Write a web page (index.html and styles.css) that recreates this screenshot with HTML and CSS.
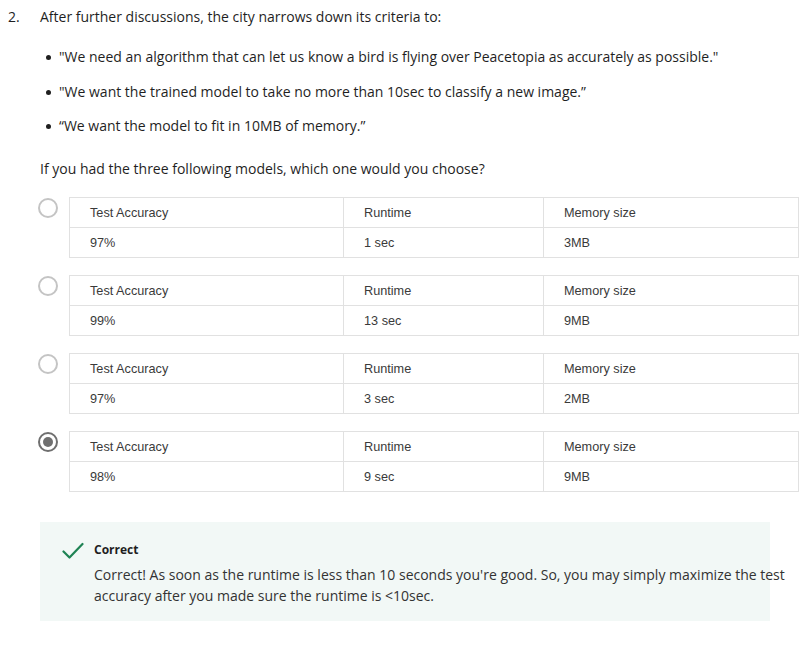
FILE: index.html
```html
<!DOCTYPE html>
<html>
<head>
<meta charset="utf-8">
<link rel="stylesheet" href="styles.css">
</head>
<body>
<div class="question">
  <div class="num">2.</div>
  <div class="content">
    <p class="prompt">After further discussions, the city narrows down its criteria to:</p>
    <ul class="criteria">
      <li>"We need an algorithm that can let us know a bird is flying over Peacetopia as accurately as possible."</li>
      <li>"We want the trained model to take no more than 10sec to classify a new image.”</li>
      <li>“We want the model to fit in 10MB of memory.”</li>
    </ul>
    <p class="ask">If you had the three following models, which one would you choose?</p>

    <div class="options">
      <div class="option">
        <span class="radio"></span>
        <table class="model">
          <tr><td class="c1">Test Accuracy</td><td class="c2">Runtime</td><td class="c3">Memory size</td></tr>
          <tr><td>97%</td><td>1 sec</td><td>3MB</td></tr>
        </table>
      </div>
      <div class="option">
        <span class="radio"></span>
        <table class="model">
          <tr><td class="c1">Test Accuracy</td><td class="c2">Runtime</td><td class="c3">Memory size</td></tr>
          <tr><td>99%</td><td>13 sec</td><td>9MB</td></tr>
        </table>
      </div>
      <div class="option">
        <span class="radio"></span>
        <table class="model">
          <tr><td class="c1">Test Accuracy</td><td class="c2">Runtime</td><td class="c3">Memory size</td></tr>
          <tr><td>97%</td><td>3 sec</td><td>2MB</td></tr>
        </table>
      </div>
      <div class="option">
        <span class="radio checked"></span>
        <table class="model">
          <tr><td class="c1">Test Accuracy</td><td class="c2">Runtime</td><td class="c3">Memory size</td></tr>
          <tr><td>98%</td><td>9 sec</td><td>9MB</td></tr>
        </table>
      </div>
    </div>

    <div class="feedback">
      <svg class="check" width="22" height="18" viewBox="0 0 22 18">
        <path d="M1.5 9.5 L7.5 15.5 L20.5 2" fill="none" stroke="#1f8354" stroke-width="2.2" stroke-linecap="round" stroke-linejoin="round"/>
      </svg>
      <div class="fb-text">
        <div class="fb-title">Correct</div>
        <div class="fb-body">Correct! As soon as the runtime is less than 10 seconds you're good. So, you may simply maximize the test accuracy after you made sure the runtime is &lt;10sec.</div>
      </div>
    </div>
  </div>
</div>
</body>
</html>
```

FILE: styles.css
```css
html, body {
  margin: 0;
  padding: 0;
  background: #ffffff;
}

body {
  font-family: "Open Sans", "Liberation Sans", sans-serif;
  font-size: 14px;
  line-height: 20px;
  color: #1f1f1f;
}

.question {
  display: flex;
  padding: 7px 0 0 8px;
}

.num {
  width: 32px;
  flex: none;
}

.content {
  flex: 1;
}

.prompt {
  margin: 0;
}

.criteria {
  list-style: none;
  margin: 20px 0 0 0;
  padding: 0 0 0 19px;
}

.criteria li {
  position: relative;
  margin-bottom: 14.5px;
}

.criteria li:last-child {
  margin-bottom: 0;
}

.criteria li::before {
  content: "";
  position: absolute;
  left: -13px;
  top: 8px;
  width: 5px;
  height: 5px;
  border-radius: 50%;
  background: #1f1f1f;
}

.ask {
  margin: 23px 0 0 0;
}

.options {
  margin-top: 18px;
  display: flex;
  flex-direction: column;
  gap: 17px;
}

.option {
  display: flex;
  align-items: flex-start;
  margin-left: -2px;
}

.radio {
  flex: none;
  width: 16px;
  height: 16px;
  border: 2px solid #c4c4c4;
  border-radius: 50%;
  margin: 1px 11px 0 0;
  position: relative;
  box-sizing: content-box;
}

.radio.checked {
  border-color: #6f6f6f;
}

.radio.checked::after {
  content: "";
  position: absolute;
  left: 3px;
  top: 3px;
  width: 10px;
  height: 10px;
  border-radius: 50%;
  background: #6f6f6f;
}

.model {
  border-collapse: collapse;
  width: 729px;
  table-layout: fixed;
  font-family: "Liberation Sans", Arial, sans-serif;
  font-size: 12.7px;
  color: #3a3a3a;
}

.model td {
  border: 1px solid #e1e1e1;
  height: 30px;
  padding: 0 0 0 20px;
  box-sizing: border-box;
  vertical-align: middle;
}

.model .c1 { width: 274px; }
.model .c2 { width: 200px; }
.model .c3 { width: 255px; }

.feedback {
  margin-top: 30px;
  width: 730px;
  box-sizing: border-box;
  background: #f2f8f6;
  padding: 20px 0 15px 22px;
  display: flex;
  align-items: flex-start;
}

.check {
  flex: none;
  margin: 0 10px 0 0;
  display: block;
}

.fb-text {
  flex: none;
  width: 700px;
}

.fb-title {
  font-size: 12px;
  font-weight: 700;
  line-height: 16px;
  color: #1f1f1f;
}

.fb-body {
  margin-top: 6px;
  line-height: 21px;
  color: #333333;
}
```
